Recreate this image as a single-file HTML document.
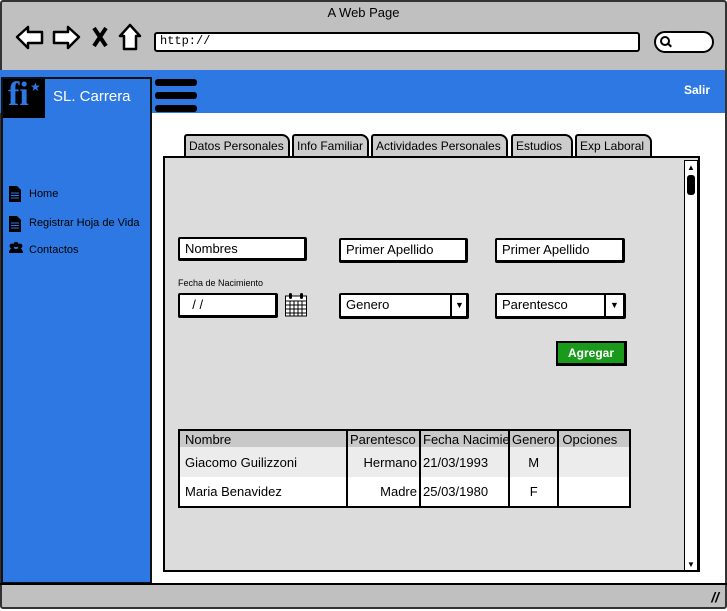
<!DOCTYPE html>
<html><head><meta charset="utf-8"><style>
*{box-sizing:border-box;margin:0;padding:0}
body{width:727px;height:611px;position:relative;overflow:hidden;background:#fff;font-family:"Liberation Sans",sans-serif;font-size:12px;color:#000}
.a{position:absolute}
.in{position:absolute;background:#fff;border:2px solid #000;border-right-width:3px;border-bottom-width:3px;border-radius:2px;padding-left:5px;font-size:13px;line-height:19px}
.tab{position:absolute;top:134px;height:23px;background:#ccc;border:2px solid #000;border-bottom:none;border-radius:3px 8px 0 0;font-size:12px;line-height:21px;padding-left:3px}
td{border-right:2px solid #000;height:30px;font-size:13px;padding:0 5px}
</style></head><body>
<div class="a" style="left:0;top:0;width:727px;height:609px;border:2px solid #333;background:#c0c0c0;border-radius:3px"></div>
<div class="a" style="left:0;top:5px;width:727px;text-align:center;font-size:13px">A Web Page</div>
<svg class="a" style="left:14px;top:22px" width="130" height="32" viewBox="0 0 130 32">
<path d="M3 15 L14 5 L14 10 L28 10 L28 21 L14 21 L14 26 Z" fill="#fff" stroke="#000" stroke-width="2.5" stroke-linejoin="round"/>
<path d="M65 15 L54 5 L54 10 L40 10 L40 21 L54 21 L54 26 Z" fill="#fff" stroke="#000" stroke-width="2.5" stroke-linejoin="round"/>
<path d="M80 6 L92 24 M92 6 L80 24" stroke="#000" stroke-width="4"/>
<path d="M116 3 L106 14 L110 14 L110 27 L122 27 L122 14 L126 14 Z" fill="#fff" stroke="#000" stroke-width="2.5" stroke-linejoin="round"/>
</svg>
<div class="a" style="left:154px;top:32px;width:486px;height:20px;background:#fff;border:2px solid #000;border-radius:3px;font-family:'Liberation Mono',monospace;font-size:12px;line-height:15px;padding-left:4px">http://</div>
<div class="a" style="left:654px;top:31px;width:60px;height:22px;background:#fff;border:2px solid #000;border-radius:11px"></div>
<div class="a" style="left:660px;top:36px;width:10px;height:10px;border:2px solid #000;border-radius:50%"></div>
<div class="a" style="left:667px;top:44px;width:5px;height:2px;background:#000;transform:rotate(45deg)"></div>
<div class="a" style="left:0;top:70px;width:725px;height:43px;background:#2d78e2"></div>
<div class="a" style="right:17px;top:83px;color:#fff;font-weight:bold;font-size:12px">Salir</div>
<div class="a" style="left:155px;top:79px;width:42px;height:7px;background:#000;border-radius:3px"></div>
<div class="a" style="left:155px;top:92px;width:42px;height:7px;background:#000;border-radius:3px"></div>
<div class="a" style="left:155px;top:105px;width:42px;height:7px;background:#000;border-radius:3px"></div>
<div class="a" style="left:151px;top:113px;width:574px;height:470px;background:#fff"></div>
<div class="a" style="left:1px;top:77px;width:151px;height:507px;background:#2d78e2;border:2px solid #111"></div>
<div class="a" style="left:3px;top:79px;width:42px;height:39px;background:#000"></div>
<div class="a" style="left:8px;top:76px;color:#2d78e2;font-family:'Liberation Serif',serif;font-weight:bold;font-size:34px">fi</div>
<div class="a" style="left:30px;top:80px;color:#2d78e2;font-size:12px">★</div>
<div class="a" style="left:53px;top:88px;color:#fff;font-size:15px">SL. Carrera</div>
<svg class="a" style="left:9px;top:186px" width="14" height="76"><path d="M0 0h8l4 4v12H0z M0 30h8l4 4v12H0z" fill="#000"/><path d="M2 7h8M2 9.5h8M2 12h8M2 37h8M2 39.5h8M2 42h8" stroke="#2d78e2" stroke-width="1"/><circle cx="3" cy="60" r="2.4"/><circle cx="7" cy="58.5" r="2.6"/><circle cx="11" cy="60" r="2.4"/><path d="M0 67c0-3 2-5 3.5-5s2.5 1 3.5 1 2-1 3.5-1 3.5 2 3.5 5z"/></svg>
<div class="a" style="left:29px;top:188px;font-size:11px">Home</div>
<div class="a" style="left:29px;top:217px;font-size:11px">Registrar Hoja de Vida</div>
<div class="a" style="left:29px;top:244px;font-size:11px">Contactos</div>
<div class="tab" style="left:184px;width:106px">Datos Personales</div>
<div class="tab" style="left:292px;width:77px">Info Familiar</div>
<div class="tab" style="left:371px;width:137px">Actividades Personales</div>
<div class="tab" style="left:511px;width:62px">Estudios</div>
<div class="tab" style="left:575px;width:77px">Exp Laboral</div>
<div class="a" style="left:163px;top:156px;width:537px;height:416px;background:#dcdcdc;border:2px solid #000"></div>
<div class="a" style="left:684px;top:160px;width:14px;height:411px;background:#fff;border:1px solid #000"></div>
<div class="a" style="left:687px;top:175px;width:8px;height:20px;background:#000;border-radius:3px"></div>
<div class="a" style="left:687px;top:163px;font-size:8px">▲</div>
<div class="a" style="left:687px;top:560px;font-size:8px">▼</div>
<div class="in" style="left:178px;top:237px;width:129px;height:24px">Nombres</div>
<div class="in" style="left:339px;top:238px;width:129px;height:25px">Primer Apellido</div>
<div class="in" style="left:495px;top:238px;width:130px;height:25px">Primer Apellido</div>
<div class="a" style="left:178px;top:278px;font-size:9px">Fecha de Nacimiento</div>
<div class="in" style="left:178px;top:293px;width:100px;height:25px">&nbsp;&nbsp;/ /</div>
<svg class="a" style="left:284px;top:292px" width="24" height="26"><rect x="1.5" y="4" width="21" height="20" fill="#fff" stroke="#000"/><path d="M1.5 9h21M1.5 13h21M1.5 17h21M1.5 21h21M6 9v15M10 9v15M14 9v15M18 9v15" stroke="#000"/><rect x="5" y="1" width="3" height="6" rx="1.5"/><rect x="16" y="1" width="3" height="6" rx="1.5"/></svg>
<div class="in" style="left:339px;top:293px;width:130px;height:26px">Genero</div>
<div class="a" style="left:450px;top:295px;width:2px;height:22px;background:#000"></div>
<div class="a" style="left:455px;top:300px;font-size:9px">▼</div>
<div class="in" style="left:495px;top:293px;width:131px;height:26px">Parentesco</div>
<div class="a" style="left:604px;top:295px;width:2px;height:22px;background:#000"></div>
<div class="a" style="left:610px;top:300px;font-size:9px">▼</div>
<div class="a" style="left:556px;top:341px;width:71px;height:25px;background:#1a9a1a;border:2px solid #000;border-right-width:3px;border-bottom-width:3px;color:#fff;font-weight:bold;font-size:12px;text-align:center;line-height:20px">Agregar</div>
<table class="a" style="left:178px;top:429px;width:453px;border:2px solid #000;border-collapse:collapse;background:#fff">
<tr style="background:#c8c8c8"><td style="height:17px;width:168px">Nombre</td><td style="height:17px;width:73px;padding:0 2px">Parentesco</td><td style="height:17px;width:89px;padding:0 2px;white-space:nowrap;overflow:hidden;max-width:89px">Fecha Nacimie</td><td style="height:17px;width:49px;padding:0 2px">Genero</td><td style="height:17px;padding:0 3px">Opciones</td></tr>
<tr style="background:#ececec"><td>Giacomo Guilizzoni</td><td style="text-align:right;padding:0 2px">Hermano</td><td style="padding:0 2px">21/03/1993</td><td style="text-align:center">M</td><td></td></tr>
<tr><td>Maria Benavidez</td><td style="text-align:right;padding:0 2px">Madre</td><td style="padding:0 2px">25/03/1980</td><td style="text-align:center">F</td><td></td></tr>
</table>
<div class="a" style="left:0;top:583px;width:727px;height:2px;background:#000"></div>
<div class="a" style="right:8px;top:589px;font-size:14px;font-weight:bold;font-style:italic">//</div>
</body></html>
